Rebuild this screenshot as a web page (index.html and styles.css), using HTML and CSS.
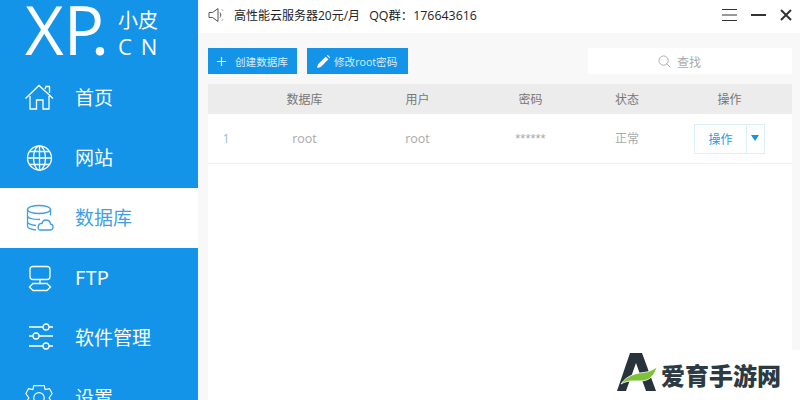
FILE: index.html
```html
<!DOCTYPE html>
<html lang="zh">
<head>
<meta charset="utf-8">
<title>小皮</title>
<link rel="stylesheet" href="styles.css">
</head>
<body>
<div class="app">
  <aside class="sidebar">
    <div class="logo">
      <span class="logo-xp">XP<span class="logo-dot">.</span></span>
      <span class="logo-side"><span class="logo-cn">小皮</span><span class="logo-en">CN</span></span>
    </div>
    <nav class="nav">
      <a class="nav-item">
        <svg class="nav-icon" viewBox="0 0 28 28"><path d="M.5 15.500 14 2.500 28 15.500M5 13V26H11.500V17H18V26H24V13M20 6 21 3.500H24.500V10"/></svg>
        <span>首页</span>
      </a>
      <a class="nav-item">
        <svg class="nav-icon" viewBox="0 0 28 28"><circle cx="14.500" cy="15" r="12"/><ellipse cx="14.500" cy="15" rx="6" ry="12"/><path d="M14.500 3V27M4.500 8.500H24.500M2.500 15H26.500M4.500 21.500H24.500"/></svg>
        <span>网站</span>
      </a>
      <a class="nav-item active">
        <svg class="nav-icon" viewBox="0 0 28 28"><ellipse cx="14" cy="6.500" rx="11.500" ry="4"/><path d="M2.500 6.500V23C2.500 25 6 26.500 11 27M25.500 6.500V12.500M2.500 12.500C2.500 15 8 16.500 15 16.500M2.500 18.500C2.500 20.500 6 22 11 22.500"/><path d="M15 27H25C29 27 29 21.500 25.500 21C25 16 18 15.500 17 20.500C12.500 20 12 27 15 27Z"/></svg>
        <span>数据库</span>
      </a>
      <a class="nav-item">
        <svg class="nav-icon" viewBox="0 0 28 28"><rect x="5" y="3.500" width="20" height="13" rx="3"/><path d="M15 16.500V20.500M8 20.500H22L25.500 24 22 27.500H8L4.500 24Z"/></svg>
        <span>FTP</span>
      </a>
      <a class="nav-item">
        <svg class="nav-icon" viewBox="0 0 28 28"><path d="M4 4H18M24 4H28M4 13H8M14 13H28M4 23H18M24 23H28"/><circle cx="21" cy="4" r="3"/><circle cx="11" cy="13" r="3"/><circle cx="21" cy="23" r="3"/></svg>
        <span>软件管理</span>
      </a>
      <a class="nav-item">
        <svg class="nav-icon" viewBox="0 0 32 32"><path d="M10 3H22L23 7.500 28 6.500 31 12 27.500 17 31 22 28 27.500 23 26.500 22 31H10L9 26.500 4 27.500 1 22 4.500 17 1 12 4 6.500 9 7.500Z"/><circle cx="16" cy="17" r="6"/></svg>
        <span>设置</span>
      </a>
    </nav>
  </aside>
  <main class="main">
    <header class="topbar">
      <svg class="speaker" viewBox="0 0 16 16"><path d="M1 5.500H4.500L10 1.500V14.500L4.500 10.500H1ZM12 5.500C13 6.500 13 9.500 12 10.500M14 2.500 14.800 3.500M14 13.500 14.800 12.500"/></svg>
      <span class="notice">高性能云服务器20元/月</span>
      <span class="notice qq">QQ群：176643616</span>
      <span class="win-controls">
        <svg class="win-icon" viewBox="0 0 15 14"><path class="thin" d="M0 1.500H15M0 7H15M0 12.500H15"/></svg>
        <svg class="win-icon" viewBox="0 0 15 14"><path d="M0 7H15"/></svg>
        <svg class="win-icon close" viewBox="0 0 14 14"><path d="M2 2 12 12M12 2 2 12"/></svg>
      </span>
    </header>
    <section class="content">
      <div class="toolbar">
        <button class="btn btn-add"><svg class="btn-icon" viewBox="0 0 12 12"><path d="M6 1V11M1 6H11"/></svg>创建数据库</button>
        <button class="btn btn-pwd"><svg class="btn-icon pencil" viewBox="0 0 12 12"><path d="M0 12 1 8.500 8 1.500 10.500 4 3.500 11ZM9 .5 10 0 12 2 11.500 3Z"/></svg>修改root密码</button>
        <div class="search"><svg class="search-icon" viewBox="0 0 14 14"><circle cx="6" cy="6" r="5"/><path d="M9.500 9.500 13 13"/></svg>查找</div>
      </div>
      <div class="table">
        <div class="row head">
          <span></span><span>数据库</span><span>用户</span><span>密码</span><span>状态</span><span>操作</span>
        </div>
        <div class="row body">
          <span class="cell-id">1</span><span class="cell-latin">root</span><span class="cell-latin">root</span><span class="stars">******</span><span class="cell-cjk">正常</span>
          <span class="cell-action"><span class="split"><span class="split-main">操作</span><span class="split-caret"></span></span></span>
        </div>
      </div>
    </section>
  </main>
</div>
<div class="watermark">
  <svg class="wm-logo" viewBox="0 0 40 38">
    <path class="wm-a" d="M0 38 13 0H25L39 38H29L19 10 9 38Z"/>
    <path class="wm-leaf" d="M4 31C10 22 20 20 27 19.500 32 19 37 16 40 14 38 21 34 26 28 27.500 20 29 12 26 4 31Z"/>
  </svg>
  <span class="wm-text">爱育手游网</span>
</div>
</body>
</html>
```
FILE: styles.css
```css
* { box-sizing: border-box; }
html, body { margin: 0; padding: 0; }
body {
  width: 800px;
  height: 400px;
  overflow: hidden;
  background: #fff;
  font-family: "Noto Sans CJK SC", "Open Sans", sans-serif;
  position: relative;
}
.app { display: flex; width: 800px; height: 400px; }

.sidebar {
  width: 198px;
  flex: none;
  height: 400px;
  overflow: hidden;
  background: #1494e8;
  color: #fff;
}
.logo { height: 68px; display: flex; padding-left: 25px; }
.logo-xp {
  font-family: "Open Sans", sans-serif;
  font-size: 67px;
  line-height: 58px;
  width: 93px;
  flex: none;
  white-space: nowrap;
}
.logo-dot { font-size: 58px; font-weight: 600; margin-left: -12px; }
.logo-side { display: flex; flex-direction: column; padding-top: 5px; }
.logo-cn { font-size: 20px; line-height: 29px; }
.logo-en { font-family: "Open Sans", sans-serif; font-size: 22px; line-height: 25px; letter-spacing: 9px; white-space: nowrap; }

.nav { display: flex; flex-direction: column; }
.nav-item {
  height: 60px;
  flex: none;
  display: flex;
  align-items: center;
  font-size: 19px;
  padding: 0 0 4px 25px;
}
.nav-item.active { background: #fff; color: #3f9fe6; }
.nav-icon {
  width: 28px;
  height: 28px;
  margin: 2px 22px 0 0;
  fill: none;
  stroke: currentColor;
  stroke-width: 1.3;
  overflow: visible;
  flex: none;
}

.main { flex: 1; display: flex; flex-direction: column; min-width: 0; }
.topbar {
  height: 33px;
  flex: none;
  display: flex;
  align-items: center;
  padding: 0 7px 3px 10px;
  background: #fff;
  font-family: "Open Sans", "Noto Sans CJK SC", sans-serif;
  font-size: 12px;
  color: #222;
}
.speaker { width: 16px; height: 16px; fill: none; stroke: #555; stroke-width: 1; margin-right: 10px; }
.notice { white-space: nowrap; }
.qq { margin-left: 9px; font-size: 12.4px; }
.win-controls { margin-left: auto; display: flex; align-items: center; gap: 14px; }
.win-icon { width: 15px; height: 14px; fill: none; stroke: #333; stroke-width: 2; }
.win-icon .thin { stroke-width: 1; }
.win-icon.close { width: 14px; margin-left: -1px; }

.content { flex: 1; background: #f8f8f8; padding: 15px 8px 0 10px; display: flex; flex-direction: column; }
.toolbar { display: flex; height: 26px; margin-bottom: 10px; flex: none; }
.btn {
  height: 26px;
  border: 0;
  background: #1494e8;
  color: #d8eefc;
  font-family: "Open Sans", "Noto Sans CJK SC", sans-serif;
  font-size: 10.6px;
  display: flex;
  align-items: center;
  padding: 0;
  white-space: nowrap;
}
.btn-add { width: 89px; padding-left: 8px; margin-right: 10px; }
.btn-pwd { width: 101px; padding-left: 10px; }
.btn-icon { width: 11px; height: 11px; margin-right: 8px; fill: none; stroke: #fff; stroke-width: 1.3; flex: none; }
.btn-icon.pencil { width: 13px; height: 13px; fill: #fff; stroke: none; margin-right: 4px; }
.search {
  margin-left: auto;
  width: 204px;
  height: 26px;
  background: #fff;
  color: #aaa;
  font-size: 12px;
  display: flex;
  align-items: center;
  padding-left: 70px;
}
.search-icon { width: 13px; height: 13px; margin-right: 6px; fill: none; stroke: #aaa; stroke-width: 1; }

.table { flex: 1; background: #fff; }
.row {
  display: grid;
  grid-template-columns: 40px 113px 113px 113px 80px 125px;
  align-items: center;
  justify-items: center;
  font-size: 12px;
}
.row.head { height: 30px; background: #ececec; color: #777; padding-bottom: 2px; }
.row.body { height: 50px; border-bottom: 1px solid #f1f1f1; color: #aaa; }
.cell-id { color: #9fbcd8; padding-right: 4px; font-family: "Open Sans", sans-serif; font-size: 12.5px; }
.cell-latin { font-family: "Open Sans", sans-serif; font-size: 12.5px; }
.cell-cjk { padding-bottom: 2px; }
.stars { font-family: "Liberation Sans", sans-serif; font-size: 13px; color: #aaa; }
.split { display: flex; height: 30px; border: 1px solid #dceffc; }
.split-main { width: 52px; display: flex; align-items: center; justify-content: center; color: #2a9aea; border-right: 1px solid #dceffc; }
.split-caret { width: 17px; position: relative; }
.split-caret::after {
  content: "";
  position: absolute;
  left: 4px;
  top: 10px;
  border-left: 4.5px solid transparent;
  border-right: 4.5px solid transparent;
  border-top: 6px solid #1494e8;
}

.watermark {
  position: absolute;
  left: 612px;
  top: 350px;
  width: 188px;
  height: 50px;
  background: #fff;
  display: flex;
  align-items: center;
  padding: 0 0 0 5px;
}
.wm-logo { width: 40px; height: 38px; flex: none; margin: -6px 4px 0 0; }
.wm-a { fill: #28333b; }
.wm-leaf { fill: #7ec23a; stroke: #fff; stroke-width: .8; }
.wm-text { font-size: 24px; font-weight: 900; color: #2c3a43; white-space: nowrap; line-height: 30px; margin-top: -1px; }
```
